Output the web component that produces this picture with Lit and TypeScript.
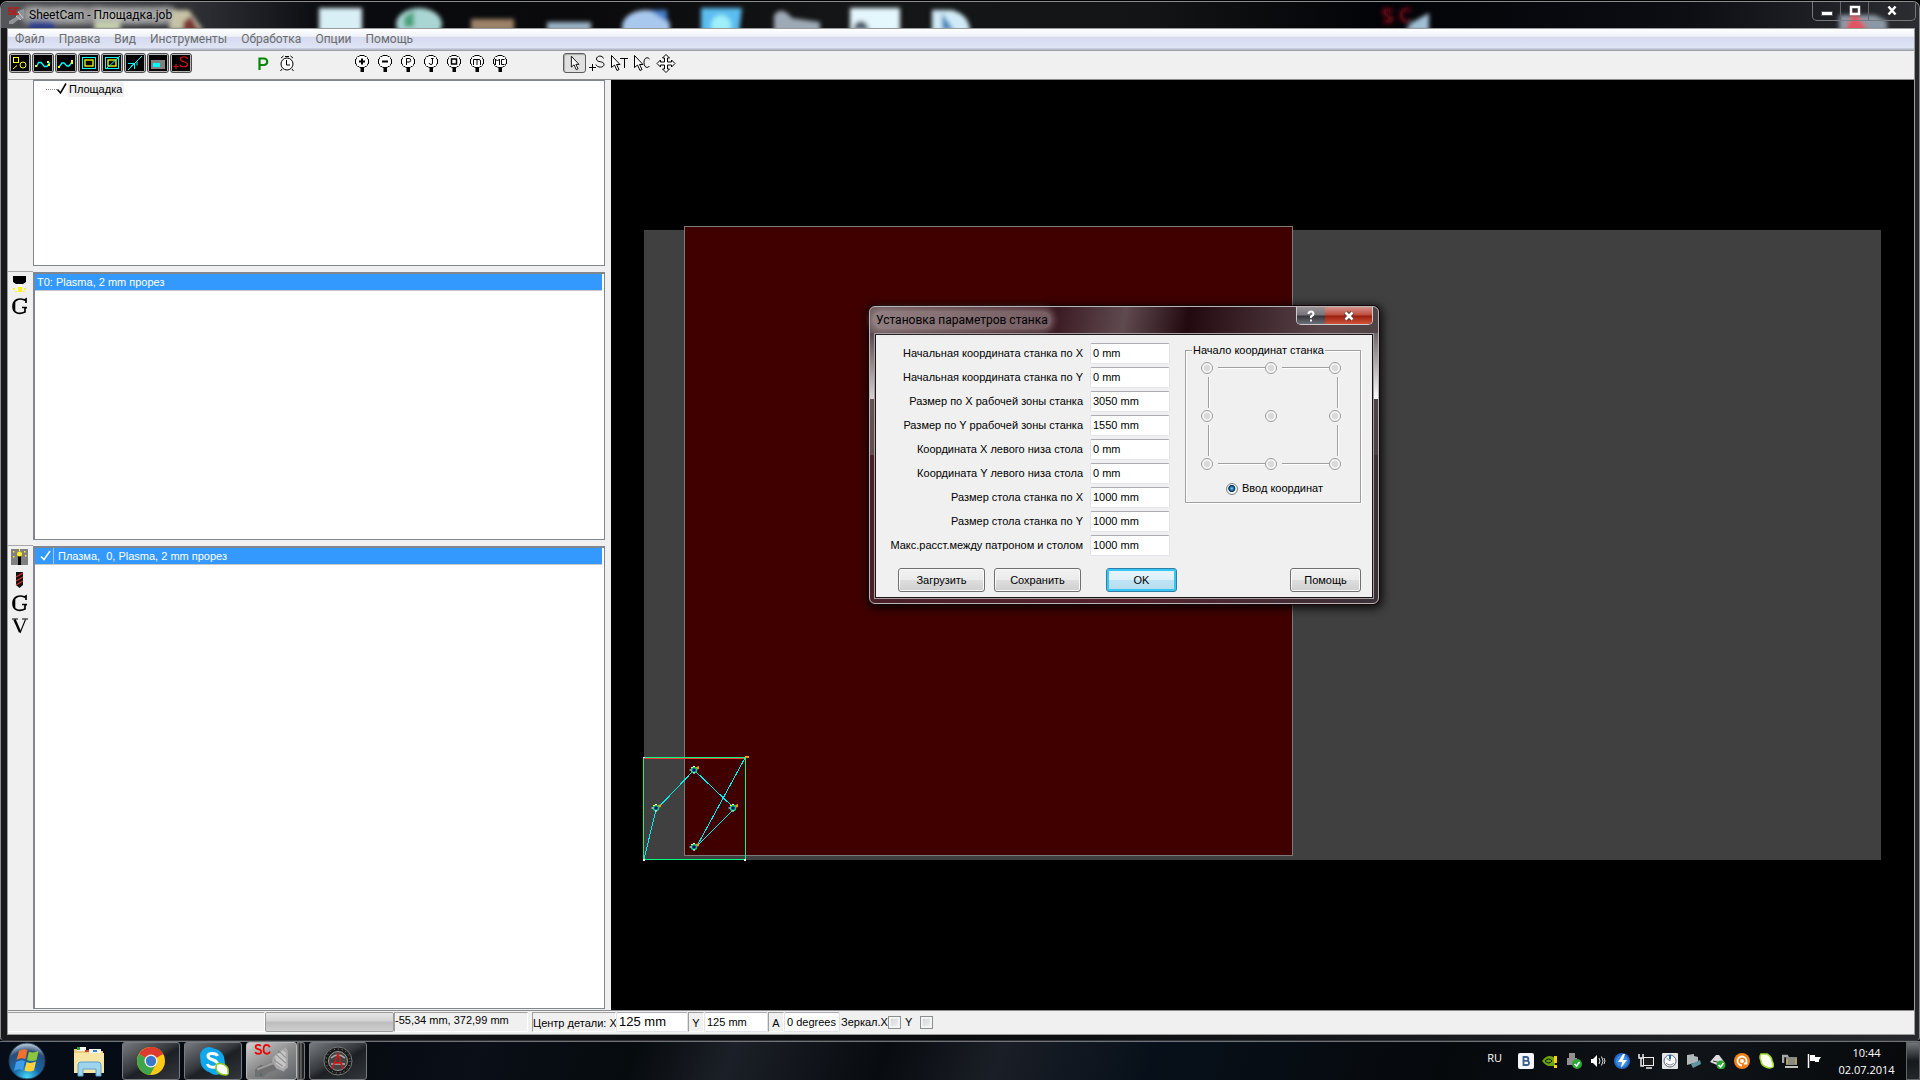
import { LitElement, html, css, svg, type TemplateResult } from "lit";
import { customElement, property } from "lit/decorators.js";

type Icon = TemplateResult;

/* ---------- toolbar glyphs, drawn on a 22 x 20 grid ---------- */

const darkTile = (inner: unknown): Icon => svg`
  <rect x="0.5" y="0.5" width="21" height="19" rx="2.5" fill="#b4b4b4" stroke="#4c4c4c"/>
  <rect x="2" y="2" width="18" height="16" fill="#000"/>${inner}`;

const lollipop = (inner: unknown): Icon => svg`
  <path d="M8.500 2.500h5M6.500 3.500h2M13.500 3.500h2M5.500 4.500v2M16.500 4.500v2M4.500 6v5M17.500 6v5M5.500 10.500v2M16.500 10.500v2M6.500 13.500h2M13.500 13.500h2M8.500 14.500h5" stroke="#000" fill="none"/>
  <ellipse cx="11" cy="8.500" rx="6" ry="5.500" fill="#fff"/>
  <rect x="9.500" y="14" width="3.500" height="5" fill="#000"/>${inner}`;

const arrow = (dx: number): Icon => svg`
  <path transform="translate(${dx} 0)" d="M.5 2.500v12l3-2.500 2.500 5.500 2-1-2.500-5h3.500z" fill="#fff" stroke="#000"/>`;

const shapeIcons: [string, Icon][] = [
  ["Деталь", darkTile(svg`<rect x="4.500" y="4.500" width="5" height="5" fill="none" stroke="#ff0"/><circle cx="14" cy="12" r="3" fill="none" stroke="#ff0"/><path d="M4 16l4-3.500" stroke="#ff0"/>`)],
  ["Путь", darkTile(svg`<path d="M4.500 14l2-4.500h2.500l3.500 4h2.500l3-4" fill="none" stroke="#0ff" stroke-width="1.300"/><path d="M3 12h2v2H3zM15 8h2v2h-2zM16 11h2v2h-2z" fill="#ff0"/>`)],
  ["Переходы", darkTile(svg`<path d="M4 14l3-4h2l3 3h2l3-4" fill="none" stroke="#0ff" stroke-width="1.300"/><path d="M3 13h2v2H3zM16 7h2v4h-2z" fill="#ff0"/>`)],
  ["Контур", darkTile(svg`<rect x="4.500" y="4.500" width="13" height="11" fill="none" stroke="#0ff"/><rect x="7" y="7" width="8" height="6" fill="none" stroke="#ff0" stroke-width="1.300"/>`)],
  ["Сегменты", darkTile(svg`<rect x="4.500" y="4.500" width="13" height="11" fill="none" stroke="#0ff"/><rect x="7" y="7" width="8" height="6" fill="none" stroke="#ff0" stroke-width="1.300"/><path d="M5 16L19 3" stroke="#0ff"/>`)],
  ["Направление", darkTile(svg`<path d="M4 17L18 3M4 10.500h6.500v5.500M10.500 10.500l-4 3M13 8.500v4" fill="none" stroke="#0ff"/>`)],
  ["Материал", darkTile(svg`<rect x="4" y="7" width="14" height="9" fill="#808080"/><rect x="6" y="10" width="7" height="4" fill="#0ff"/>`)],
  ["Старт", darkTile(svg`<path d="M3.500 13.500h5M6 11v5M17.500 6c0-3-7-3-7 0 0 3.500 7 2 7 5.500 0 3-7.500 3-7.500 0" fill="none" stroke="#e01010" stroke-width="1.200"/>`)],
];

const runIcons: [string, Icon][] = [
  ["Постпроцессор", svg`<path d="M7.500 17V5.500h4.500a3 3 0 0 1 0 6.500H8" fill="none" stroke="#008a00" stroke-width="2.200"/>`],
  ["Время", svg`<circle cx="12" cy="11" r="6" fill="#fff" stroke="#000"/><path d="M6 5l2.500-2M18 5l-2.500-2M10 3.500h4M7 16l-1.500 2M17 16l1.500 2M11.500 7v5h3.500" fill="none" stroke="#000"/>`],
];

const zoomIcons: [string, Icon][] = [
  ["Увеличить", lollipop(svg`<path d="M8 8.500h6M11 5.500v6" stroke="#000" stroke-width="2"/>`)],
  ["Уменьшить", lollipop(svg`<path d="M8 8.500h6" stroke="#000" stroke-width="2"/>`)],
  ["Вся деталь", lollipop(svg`<path d="M9.500 12V5.500h2.500a1.500 1.500 0 0 1 0 3.500H9.500" fill="none" stroke="#000"/>`)],
  ["Всё задание", lollipop(svg`<path d="M11 5.500h2.500M12.500 5.500V10q0 1.500-1.500 1.500t-2-1.500" fill="none" stroke="#000"/>`)],
  ["Рабочая область", lollipop(svg`<rect x="8.500" y="6" width="5" height="5" fill="none" stroke="#000" stroke-width="1.500"/>`)],
  ["Материал целиком", lollipop(svg`<path d="M7.500 12V6.500h5.500q1.500 0 1.500 1.500v4M11 6.500V12" fill="none" stroke="#000"/>`)],
  ["Станок целиком", lollipop(svg`<path d="M6.500 12V6l2 2 2-2v6M15.500 6.500h-3v5h3" fill="none" stroke="#000"/>`)],
];

const modeIcons: [string, Icon][] = [
  ["Выбор", arrow(7)],
  ["Начальная точка", svg`<path d="M3 14.500h7M6.500 11v7M17.500 5.500c-1-3.500-7-3-7 .5 0 4 7.500 1.500 7.500 5.500 0 3.500-7 3.500-8 0" fill="none" stroke="#000"/>`],
  ["Перемычки", svg`${arrow(2)}<path d="M11 5.500h8M15.500 5v10" stroke="#000" fill="none"/>`],
  ["Контуры", svg`${arrow(2)}<path d="M17.500 6c-1.500-2-5.500-2-5.500 3.500s4 6 5.500 3.500" stroke="#000" fill="none"/>`],
  ["Переместить", svg`<path d="M11 1.500l3.500 3.500h-2v4h4v-2L20 10.500 16.500 14v-2h-4v4h2L11 19.500 7.500 16h2v-4h-4v2L2 10.500 5.500 7v2h4V5h-2z" fill="#fff" stroke="#000"/>`],
];

@customElement("sc-toolbar")
class ScToolbar extends LitElement {
  static styles = css`
    :host { display: flex; align-items: center; height: 30px; padding: 0 1px 4px; box-sizing: border-box;
      background: #f0f0f0; border-top: 1px solid #a0a0a0; border-bottom: 1px solid #8c8c8c; }
    .group { display: flex; }
    .run { margin-left: 59px; }
    .zoom { margin-left: 53px; }
    .mode { margin-left: 51px; }
    .tool { width: 23px; height: 20px; padding: 0; border: 0; background: none; display: flex; }
    .tool svg { width: 22px; height: 20px; display: block; }
    .tool.pressed { border: 1px solid #5c5c5c; border-radius: 3px; background: #e0e0e0; box-shadow: inset 1px 1px 1px #aaa; }
    .tool.pressed svg { width: 21px; height: 18px; }
  `;
  private group(name: string, items: [string, Icon][], pressed = -1) {
    return html`<div class="group ${name}">
      ${items.map(([label, icon], i) => html`<button class="tool ${i === pressed ? "pressed" : ""}" aria-label=${label}>
        <svg viewBox="0 0 22 20">${icon}</svg></button>`)}
    </div>`;
  }
  render() {
    return html`${this.group("shapes", shapeIcons)}${this.group("run", runIcons)}
      ${this.group("zoom", zoomIcons)}${this.group("mode", modeIcons, 0)}`;
  }
}

/* ---------- window title bar ---------- */

@customElement("sc-titlebar")
class ScTitlebar extends LitElement {
  static styles = css`
    :host { display: flex; position: relative; height: 26px; overflow: hidden; }
    .backdrop { position: absolute; inset: 0; width: 100%; height: 100%; }
    .logo { width: 17px; height: 18px; margin: 5px 0 0 7px; position: relative; }
    .title { position: relative; margin: 5px 0 0 4px; font: 12px/17px Roboto, "Open Sans", sans-serif; color: #000;
      text-shadow: 0 0 6px #ddd, 0 0 8px #bbb, 0 0 10px #aaa; }
    .caption { position: relative; display: flex; margin: 0 3px 0 auto; height: 19px; border: 1px solid #77787c; border-top: 0;
      border-radius: 0 0 5px 5px; box-sizing: border-box; }
    .caption button { width: 28px; padding: 0; border: 0; border-right: 1px solid #66676b; background: none; display: grid; place-items: center; }
    .caption .close { width: 46px; border-right: 0; }
    .caption svg { width: 14px; height: 12px; }
  `;
  render() {
    return html`
      <svg class="backdrop" viewBox="0 0 1918 26" preserveAspectRatio="xMinYMin slice" aria-hidden="true">
        <defs>
          <filter id="soft" x="-30%" y="-50%" width="160%" height="200%"><feGaussianBlur stdDeviation="2"/></filter>
          <linearGradient id="glass" x1="0" x2="1">
            <stop offset="0" stop-color="#55565a"/><stop offset=".1" stop-color="#303136"/><stop offset=".17" stop-color="#0a0b0f"/>
            <stop offset=".3" stop-color="#0a0a0c"/><stop offset=".45" stop-color="#151617"/><stop offset=".6" stop-color="#131416"/>
            <stop offset=".72" stop-color="#020306"/><stop offset=".88" stop-color="#0c0e14"/><stop offset="1" stop-color="#2c2d31"/>
          </linearGradient>
        </defs>
        <rect width="1918" height="27" fill="url(#glass)"/>
        <g filter="url(#soft)" transform="translate(0 -1)">
          <rect x="20" y="5" width="156" height="19" rx="8" fill="#a0a0a0" opacity=".6"/>
          <path d="M28 29V18l14-4 12 8v7z" fill="#2b3d8c"/><path d="M93 29l2-18h26l-2 18z" fill="#c9d3b0"/>
          <path d="M168 29l2-20h18l14 20z" fill="#c8c3a6"/><path d="M182 29v-8l8-6 8 14z" fill="#7e3736"/>
          <rect x="24" y="7" width="146" height="14" rx="7" fill="#a0a0a0" opacity=".5"/>
          <rect x="318" y="7" width="43" height="24" fill="#d9eff6"/>
          <ellipse cx="418" cy="23" rx="23" ry="16" fill="#a9d5d3"/><path d="M403 16l10-6v16h-10z" fill="#4aa27c"/>
          <rect x="470" y="18" width="43" height="12" fill="#9c8266"/>
          <rect x="546" y="21" width="44" height="9" fill="#9ab2c4"/>
          <ellipse cx="645" cy="26" rx="24" ry="17" fill="#a8c8ee"/><path d="M648 9h18v12z" fill="#477ecb"/>
          <path d="M700 7h41l-3 24h-38z" fill="#5cbdf0"/><circle cx="720" cy="24" r="10" fill="#9ff0fa"/>
          <path d="M773 31V14q8-10 18 3l28 4v10z" fill="#9da9b5"/>
          <rect x="849" y="7" width="50" height="24" fill="#e4f7fc"/><path d="M852 29q2-12 12-8l5 8z" fill="#4d5a6b"/>
          <path d="M931 31V9h20q18 5 18 22z" fill="#d0ebf7"/><path d="M941 29V12l12 17z" fill="#4689bc"/>
          <path d="M1392 10q-12-4-9 3l8 4q0 6-9 3M1410 9q-11-2-10 6t10 4" fill="none" stroke="#80101a" stroke-width="3"/>
          <path d="M1404 30l6-8 18-10v18z" fill="#a2c0d4"/>
          <path d="M1838 30V14h36l12 6v10z" fill="#8c98a6"/><path d="M1844 30l9-20 14 20z" fill="#e25560"/>
        </g>
      </svg>
      <svg class="logo" viewBox="0 0 17 18" aria-hidden="true">
        <path d="M1 17v-3l7-4 2-6 6-2v10l-6 1-5 4z" fill="#8f9296"/><path d="M10 5l5 6M8 9l5 4" stroke="#d0d0d0"/>
        <path d="M5 1H1v3h4v3H0M11 1H7v6h4" fill="none" stroke="#c01818" stroke-width="1.500"/>
      </svg>
      <div class="title">SheetCam - Площадка.job</div>
      <div class="caption">
        <button aria-label="Свернуть"><svg viewBox="0 0 14 12"><rect x="1.500" y="6.500" width="11" height="4" fill="#fff" stroke="#50505c"/></svg></button>
        <button aria-label="Развернуть"><svg viewBox="0 0 14 12"><rect x="3" y="2" width="8" height="7" fill="none" stroke="#fff" stroke-width="2.500"/></svg></button>
        <button class="close" aria-label="Закрыть"><svg viewBox="0 0 14 12"><path d="M3.500 1.500l7 8M10.500 1.500l-7 8" stroke="#fff" stroke-width="2.500"/></svg></button>
      </div>`;
  }
}

/* ---------- left-hand panes ---------- */

const sideIcons: Record<string, Icon> = {
  torch: svg`<path d="M2 2h13v6l-3 2H5L2 8z" fill="#000"/><path d="M7 13h4v5H7zM2 14h2v2H2zM13 14h2v2h-2zM4 17h2v1H4zM12 17h2v1h-2z" fill="#ffef20"/><path d="M7 10h4v3H7z" fill="#fff"/>`,
  gcode: svg`<path d="M15 6V2l-1.500 1C8 .500 2 3 2 9.500s6 8.500 12 5.500v-4h1.500M11 10.500h5" fill="none" stroke="#000" stroke-width="1.700"/><path d="M3.300 5v9" stroke="#000" stroke-width="2"/>`,
  spark: svg`<rect x="0" y="1" width="17" height="16" fill="#808080"/><path d="M7 8h3v9H7z" fill="#000"/><circle cx="8.500" cy="6" r="2.500" fill="#ffef20"/><path d="M2 3h1.500v1.500H2zM13 3h1.500v1.500H13zM2 8h1.500v1.500H2zM14 7h1.500v1.500H14zM8 1h1v2H8z" fill="#ffef20"/>`,
  drill: svg`<path d="M5 1h7v13l-3.500 3L5 14z" fill="#111"/><path d="M5 6l7-4M5 10l7-4M5 14l7-4" stroke="#d03030" stroke-width="1.300"/>`,
  tool: svg`<path d="M1 2h6M11 2h6" stroke="#000" stroke-width="1.200"/><path d="M3.500 2.500L9 15" stroke="#000" stroke-width="2.400"/><path d="M14.500 2.500L9 16" stroke="#000" stroke-width="1.100"/>`,
};

@customElement("sc-pane")
class ScPane extends LitElement {
  @property({ attribute: false }) icons: [string, string][] = [];
  static styles = css`
    :host { display: grid; grid-template-columns: 25px minmax(0, 1fr); padding: 1px 6px 5px 0; background: #f0f0f0; min-height: 0; }
    :host(.first) { padding-top: 0; }
    :host(.last) { padding-bottom: 1px; }
    .icons { display: flex; flex-direction: column; gap: 5px; align-items: center; padding: 2px 2px 0 0; border-top: 1px solid #a8a8a8; margin-top: -1px; }
    .icons button { border: 0; padding: 0; background: none; display: block; }
    .icons svg { width: 18px; height: 18px; display: block; }
    .box { background: #fff; border: 1px solid #82878f; }
    :host(.list) .box { border-top-width: 2px; border-left-width: 2px; }
  `;
  render() {
    return html`<div class="icons">${this.icons.map(([name, label]) => html`
        <button aria-label=${label}><svg viewBox="0 0 18 18">${sideIcons[name]}</svg></button>`)}</div>
      <div class="box"><slot></slot></div>`;
  }
}

/* ---------- drawing area ---------- */

@customElement("sc-canvas")
class ScCanvas extends LitElement {
  static styles = css`
    :host { display: block; background: #000; min-width: 0; min-height: 0; overflow: hidden; }
    .view { display: block; width: 100%; height: 100%; }
  `;
  private pierce([x, y]: [number, number]) {
    return svg`<g transform="translate(${x} ${y})">
      <path d="M-2 -1.500l3-1 4-1.500v3l-4 1z" fill="#ff9500"/>
      <circle r="2.500" fill="#000080" stroke="#00d080" stroke-width="1.500"/>
      <path d="M-1 -3.500h2M-4.500 0h2M-1 3h2" stroke="#fff" stroke-width="1.200"/><path d="M-3 -2.500h2" stroke="#ff0"/></g>`;
  }
  render() {
    const holes: [number, number][] = [[83, 690], [45, 728], [122, 728], [83, 767]];
    return html`<svg class="view" viewBox="0 0 1303 930" preserveAspectRatio="xMinYMin meet" role="img" aria-label="Рабочая зона станка">
      <rect x="33" y="150" width="1237" height="630" fill="#404040"/>
      <rect x="73.500" y="146.500" width="608" height="629" fill="#400000" stroke="#7b7b7b"/>
      <path d="M33 678.500h101" stroke="#ff3838" stroke-width="1"/>
      <rect x="32.500" y="677.500" width="102" height="102" fill="none" stroke="#00ff80"/>
      <path d="M33 779L45 730 83 690 122 727M122 730L86 766 134 678" fill="none" stroke="#00f0f0" shape-rendering="crispEdges"/>
      ${holes.map((p) => this.pierce(p))}
      <path d="M134 676h4v2h-4z" fill="#ff9500"/><path d="M32 677h2v1h-2zM32 779h2v2h-2zM133 779h2v2h-2z" fill="#fff"/>
    </svg>`;
  }
}

/* ---------- status bar ---------- */

@customElement("sc-status")
class ScStatus extends LitElement {
  static styles = css`
    :host { display: flex; align-items: stretch; height: 24px; padding: 1px 0 2px; box-sizing: border-box;
      font: 11px/18px "Liberation Sans", Arial, sans-serif; background: #f0f0f0; border-top: 1px solid #8c8c8c; white-space: nowrap; }
    .cell { box-sizing: border-box; border: 1px solid #a0a0a0; border-right-color: #fff; border-bottom-color: #fff; }
    .blank { width: 257px; border-left: 0; }
    .bar { width: 129px; border: 1px solid #9a9a9a; border-radius: 2px; box-sizing: border-box; background: linear-gradient(#e6e6e6, #d2d2d2 45%, #bdbdbd 50%, #cfcfcf); }
    .coords { width: 134px; line-height: 14px; }
    .centre { width: 84px; margin-left: 4px; padding-top: 1px; }
    .axis { width: 16px; text-align: center; padding-top: 1px; }
    .box { box-sizing: border-box; border: 1px solid #e2e3ea; border-top-color: #abadb3; padding: 1px 2px; font: inherit; background: #fff; color: #000; width: 64px; border-radius: 2px; }
    .wide { font-size: 13px; width: 72px; }
    .narrow { width: 56px; }
    .mirror { display: flex; align-items: center; padding-left: 1px; }
    .second { padding-left: 4px; gap: 8px; }
    .tick { appearance: none; width: 13px; height: 13px; margin: 0; border: 1px solid #8e8f8f; background: linear-gradient(135deg, #cbcfd5, #f6f6f6); box-shadow: inset 0 0 0 2px #f4f4f4; }
  `;
  render() {
    return html`
      <div class="cell blank"></div>
      <div class="bar" role="progressbar" aria-label="Ход выполнения"></div>
      <div class="cell coords">-55,34 mm, 372,99 mm</div>
      <label class="cell centre" for="cx">Центр детали: X</label><input id="cx" class="box wide" value="125 mm">
      <label class="cell axis" for="cy">Y</label><input id="cy" class="box" value="125 mm">
      <label class="cell axis" for="ca">A</label><input id="ca" class="box narrow" value="0 degrees">
      <label class="mirror">Зеркал.X<input type="checkbox" class="tick"></label>
      <label class="mirror second">Y<input type="checkbox" class="tick"></label>`;
  }
}

/* ---------- machine settings dialog ---------- */

const fields: [string, string][] = [
  ["Начальная координата станка по X", "0 mm"],
  ["Начальная координата станка по Y", "0 mm"],
  ["Размер по X рабочей зоны станка", "3050 mm"],
  ["Размер по Y ррабочей зоны станка", "1550 mm"],
  ["Координата X левого низа стола", "0 mm"],
  ["Координата Y левого низа стола", "0 mm"],
  ["Размер стола станка по X", "1000 mm"],
  ["Размер стола станка по Y", "1000 mm"],
  ["Макс.расст.между патроном и столом", "1000 mm"],
];

@customElement("sc-dialog")
class ScDialog extends LitElement {
  static styles = css`
    :host { display: block; box-sizing: border-box; padding: 0 5px 5px; border: 1px solid #b9b4b6; border-radius: 6px;
      background: linear-gradient(#5a474b, #d8d2d4) left 26px / 5px 66px no-repeat,
        linear-gradient(#6b676a, #fff) right 26px / 5px 66px no-repeat,
        linear-gradient(100deg, #6a5659, #3b1a22 35%, #5f4a50 48%, #22090f 60%, #5a4449 85%, #4a4446) top / 100% 50% no-repeat,
        linear-gradient(90deg, #4a1f29, #54202c 50%, #3b3238);
      box-shadow: 0 0 0 1px #180508, 1px 2px 9px 3px rgba(0, 0, 0, .75);
      font: 11px/15px "Liberation Sans", Arial, sans-serif; color: #000; }
    .head { display: flex; height: 27px; }
    .title { margin: 4px 0 0 -2px; padding: 0 3px; height: 18px; font: 12px/19px Roboto, "Open Sans", sans-serif;
      background: rgba(205, 190, 193, .4); border-radius: 8px; box-shadow: 0 0 6px 3px rgba(205, 190, 193, .4); }
    .caption { display: flex; margin-left: auto; height: 18px; border: 1px solid #ccc; border-top: 0; border-radius: 0 0 5px 5px; overflow: hidden; box-sizing: border-box; }
    .caption button { padding: 0; border: 0; display: grid; place-items: center; }
    .caption svg { width: 14px; height: 14px; }
    .help { width: 28px; background: linear-gradient(#9a9296, #77737a 48%, #353439 52%, #6c7078); }
    .close { width: 47px; background: linear-gradient(#d4938b, #bd4b3c 48%, #9b1d0e 52%, #d0543a); }
    .body { background: #f0f0f0; border: 1px solid #1c1518; outline: 1px solid #a59da0; padding: 8px 11px 5px 6px; }
    .main { display: grid; grid-template-columns: 288px 176px; justify-content: space-between; align-items: start; }
    .fields { display: grid; gap: 3px; }
    .row { display: grid; grid-template-columns: minmax(0, 1fr) 80px; gap: 7px; align-items: center; text-align: right; white-space: nowrap; }
    .row label { justify-self: end; }
    .row input { box-sizing: border-box; width: 100%; height: 21px; padding: 0 2px 1px; font: inherit; color: #000; background: #fff; border: 1px solid #e2e3ea; border-top-color: #abadb3; border-radius: 2px; }
    .origin { margin: 0; padding: 5px 19px 6px 15px; border: 1px solid #a0a0a0; box-shadow: 1px 1px #fff, inset 1px 1px #fff; min-width: 0; }
    .origin legend { padding: 0 1px; margin-left: -9px; background: #f0f0f0; height: 14px; }
    .grid { display: grid; grid-template-columns: repeat(3, 12px); grid-template-rows: repeat(3, 12px); justify-content: space-between; row-gap: 36px; }
    .grid svg { grid-area: 1 / 1 / 4 / 4; width: 100%; height: 100%; }
    .dot { appearance: none; width: 12px; height: 12px; margin: 0; border: 1px solid #9a9b9b; border-radius: 50%; background: radial-gradient(#dadada 40%, #f8f8f8 55%); }
    .dot.on { border-color: #7c8288; background: radial-gradient(circle at 48% 45%, #8fd6f4, #0f5f98 28%, #0a2f50 42%, #f4f4f4 52%); }
    .manual { display: flex; justify-content: center; align-items: center; gap: 4px; margin-top: 11px; padding-left: 7px; }
    .actions { display: flex; gap: 9px; margin-top: 12px; padding-left: 16px; }
    .btn { box-sizing: border-box; height: 24px; width: 87px; border: 1px solid #707070; border-radius: 3px; padding: 0; font: inherit; color: #000;
      background: linear-gradient(#f2f2f2, #ebebeb 48%, #dddddd 52%, #cfcfcf); box-shadow: inset 0 0 0 1px #fafafa; }
    .small { width: 71px; }
    .ok { margin-left: 16px; border-color: #2f7fa8; background: linear-gradient(#e8f5fc, #dcf0fa 48%, #c0e3f4 52%, #b4dcee); box-shadow: inset 0 0 0 2px #35c6f4; }
    .last { margin-left: auto; }
  `;
  render() {
    return html`
      <div class="head">
        <div class="title">Установка параметров станка</div>
        <div class="caption">
          <button class="help" aria-label="Справка"><svg viewBox="0 0 14 14"><path d="M4.500 5q0-2.500 2.500-2.500T9.500 5Q9.500 6.500 7 7.500V9M7 10.500v2" fill="none" stroke="#fff" stroke-width="2"/></svg></button>
          <button class="close" aria-label="Закрыть"><svg viewBox="0 0 14 14"><path d="M3.500 3.500l7 7M10.500 3.500l-7 7" stroke="#4a3436" stroke-width="4.500"/><path d="M3.500 3.500l7 7M10.500 3.500l-7 7" stroke="#fff" stroke-width="2.600"/></svg></button>
        </div>
      </div>
      <div class="body">
        <div class="main">
          <div class="fields">${fields.map(([label, value], i) => html`
            <div class="row"><label for="f${i}">${label}</label><input id="f${i}" .value=${value}></div>`)}</div>
          <fieldset class="origin">
            <legend>Начало координат станка</legend>
            <div class="grid">
              <svg viewBox="0 0 140 108" preserveAspectRatio="none" aria-hidden="true">
                <path d="M17 5.500h47M81 5.500h47M17 101.500h47M81 101.500h47M7.500 15v31M7.500 63v31M136.500 15v31M136.500 63v31" stroke="#a0a0a0"/>
                <path d="M17 6.500h47M81 6.500h47M17 102.500h47M81 102.500h47M8.500 15v31M8.500 63v31M137.500 15v31M137.500 63v31" stroke="#fff"/>
              </svg>
              ${Array.from({ length: 9 }, (_, i) => html`<input type="radio" class="dot" name="origin" disabled aria-label="Точка ${i + 1}"
                style="grid-area: ${Math.floor(i / 3) + 1} / ${(i % 3) + 1}">`)}
            </div>
            <label class="manual"><input type="radio" class="dot on" name="origin" checked>Ввод координат</label>
          </fieldset>
        </div>
        <div class="actions">
          <button class="btn">Загрузить</button><button class="btn">Сохранить</button>
          <button class="btn small ok">OK</button><button class="btn small last">Помощь</button>
        </div>
      </div>`;
  }
}

/* ---------- taskbar ---------- */

const chrome = svg`<circle cx="16" cy="16" r="14" fill="#fbc916"/><path d="M16 16L3.900 9A14 14 0 0 1 28.100 9z" fill="#dd3b2d"/>
  <path d="M16 2a14 14 0 0 1 12.100 7H16z" fill="#dd3b2d"/><path d="M3.900 9A14 14 0 0 0 15 30l6-11-5-3z" fill="#3fa548"/><circle cx="16" cy="16" r="6.500" fill="#f3f3f3"/><circle cx="16" cy="16" r="5.200" fill="#3c78c8"/>`;
const skype = svg`<rect x="3" y="2" width="18" height="18" rx="9" fill="#10a8ea"/><rect x="10" y="10" width="18" height="20" rx="9" fill="#10a8ea"/><circle cx="15.500" cy="15.500" r="12" fill="#10a8ea"/>
  <path d="M20.500 11c-1-3.500-9.500-3.500-9.500 0 0 4.500 9.500 3 9.500 8 0 4.500-9 4-10 0" fill="none" stroke="#fff" stroke-width="3"/>
  <path d="M20 19q2-1 6 0 6 3 5 7 1 4-2 4-6 0-9-4-2-4 0-7z" fill="#fff" stroke="#8cc820" stroke-width="1.500"/>`;
const sheetcam = svg`<path d="M1 31v-7l3-3 9-2 6-3 7 4-4 4-9 3-4 4z" fill="#707070"/><path d="M18 12l7-6 5-3 2 3v16l-4 4-7-3-4-6z" fill="#a8a8a8"/>
  <path d="M20 11l7-5 3 2v12l-3 3-6-4z" fill="#c6c6c6"/><path d="M19 15l8 6M21 10l9 8M24 7l6 6" stroke="#8e8e8e"/><path d="M3 24l10-4 6-2" stroke="#9c9c9c" stroke-width="2" fill="none"/>
  <path d="M6 28h1v2H6zM23 7h1v1h-1zM6 20h1v1H6z" fill="#0a6a6a"/>
  <path d="M6.500 1.800Q5.500.8 4 .8 1.500.8 1.500 2.800 1.500 4.200 4 4.800 6.800 5.400 6.800 7.200 6.800 9.200 4 9.200 2 9.200 1 7.800M15 2.800Q14 .8 12 .8 9 .8 9 5t3.200 4.200q2 0 3-2" fill="none" stroke="#e00" stroke-width="1.600"/>`;
const badge = svg`<circle cx="16" cy="16" r="14" fill="#1a1a1a" stroke="#777"/><circle cx="16" cy="16" r="9.500" fill="#444" stroke="#999"/>
  <path d="M9 13q7-6 14 0M9 19h14" stroke="#aaa" stroke-width="1.500" fill="none"/><path d="M10 24l6-15 5 15M12 18h8" fill="none" stroke="#d01818" stroke-width="1.600"/><circle cx="16" cy="16" r="12" fill="none" stroke="#999" stroke-dasharray="1 3"/>`;

const tray: [string, Icon][] = [
  ["ВКонтакте", svg`<rect width="16" height="16" rx="2" fill="#f4f6f9"/><path d="M5.500 4h3q1.800 0 1.800 1.900T8.500 7.800h-3h3.500q2 0 2 2.100t-2 2.100H5.500z" fill="none" stroke="#3d5f8c" stroke-width="1.800"/>`],
  ["NVIDIA", svg`<path d="M0 8q6-8 13-3v8H6Q2 11 0 8z" fill="#6aa50e"/><path d="M3 8q4-4 7 0-3 4-7 0z" fill="none" stroke="#111"/><path d="M12 3h3v7h-3zM12 12h3v3h-3z" fill="#ffcf10"/>`],
  ["Устройства", svg`<path d="M3 0h6v5h2v7H1V5h2z" fill="#909090"/><circle cx="11" cy="11" r="5" fill="#2aa836"/><path d="M8.500 11l2 2 3-4" fill="none" stroke="#fff" stroke-width="1.500"/>`],
  ["Громкость", svg`<path d="M1 6h2l4-4v12l-4-4H1z" fill="#fff"/><path d="M9 5q2 3 0 6M11.500 3.500q3 4.500 0 9M14 5q2 3 0 6" fill="none" stroke="#ddd"/>`],
  ["Питание", svg`<circle cx="8" cy="8" r="8" fill="#2468c8"/><circle cx="8" cy="8" r="6" fill="#3c8ce4"/><path d="M9 1L4 9h4l-1 6 6-8H9l2-6z" fill="#fff"/>`],
  ["Сеть", svg`<rect x="5.500" y="4.500" width="10" height="8" fill="#1c1c1c" stroke="#eee"/><path d="M1 1v4h4V1M3 5v8h3M8 15h6" stroke="#eee" stroke-width="1.500" fill="none"/>`],
  ["Монитор", svg`<rect width="16" height="16" rx="1" fill="#e4e6e8"/><circle cx="8" cy="8" r="6" fill="#fff" stroke="#5d6b7c"/><path d="M8 3v5M8 8l-3.500-3M4 10q4 4 8 0" stroke="#7a8794" fill="none"/><path d="M7 2h2v4H7z" fill="#286cb8"/>`],
  ["Сканер", svg`<path d="M1 2l7-1v9l-7 2zM8 3l4 1v5l-4 2z" fill="#b0b8bc"/><path d="M5 11l9-4 1 4-8 4z" fill="#6096a0"/>`],
  ["Диск", svg`<path d="M0 9l6-7h3l6 8-8 2z" fill="#ddd"/><path d="M3 8l8 2" stroke="#333"/><circle cx="11" cy="12" r="4.500" fill="#2aa836"/><path d="M8.500 12l2 2 3-4" fill="none" stroke="#fff" stroke-width="1.500"/>`],
  ["Avast", svg`<circle cx="8" cy="8" r="8" fill="#f28018"/><path d="M8 12.500A4.500 4.500 0 1 1 12.500 8v2.500H9.800" fill="none" stroke="#fff" stroke-width="1.800"/><circle cx="8" cy="8" r="2" fill="#fff"/>`],
  ["Агент", svg`<path d="M3 1h6q5 3 5 7 2 3 1 6-3 2-7 0-5-2-5-6-2-4 0-7z" fill="#fbfff0" stroke="#a0dc30" stroke-width="1.500"/>`],
  ["Накопитель", svg`<path d="M1 10V3h4l1 2" fill="none" stroke="#a8a8a8" stroke-width="2.500"/><path d="M4 4h11v8H4z" fill="#8a8a84"/><path d="M3 13h13v2H3z" fill="#c4c4b8"/><path d="M5 6v5M14 6v5" stroke="#ddb830"/>`],
  ["Центр поддержки", svg`<path d="M2.500 1v14" stroke="#fff" stroke-width="1.500"/><path d="M4 2h5v2h6l-2 3v2H9V8H4z" fill="#fff"/>`],
];

@customElement("sc-taskbar")
class ScTaskbar extends LitElement {
  static styles = css`
    :host { display: flex; align-items: stretch; height: 39px; box-sizing: border-box; border-top: 1px solid #6d747c; padding-left: 8px;
      background: linear-gradient(110deg, #060d18, #050a10 15%, #0a0f18 25%, #060b0e 33%, #1b1f27 38%, #080c10 46%, #1a1e26 52%, #07101a 60%, #06090c 75%, #101418 88%, #06080a);
      font: 11px/15px "Open Sans", "Noto Sans", sans-serif; color: #fff; }
    button { border: 0; padding: 0; background: none; color: inherit; font: inherit; }
    .start { width: 38px; margin-right: 21px; }
    .start svg { display: block; width: 38px; height: 38px; }
    .explorer { width: 44px; margin-right: 11px; }
    .app { width: 58px; margin-right: 4px; box-sizing: border-box; border: 1px solid #777c82; border-radius: 3px; display: grid; place-items: center;
      background: linear-gradient(150deg, #777b80, #35393d 45%, #1c2024 55%, #33373b); }
    .app svg, .explorer svg { display: block; width: 32px; height: 32px; margin: auto; }
    .active { width: 51px; margin-right: 0; border-color: #b6b6b6; background: linear-gradient(150deg, #cfcfcf, #8a8a8a 50%, #606468); }
    .active svg { width: 36px; height: 34px; }
    .stack { width: 7px; margin-right: 4px; border: solid #777; border-width: 1px 1px 1px 0; border-radius: 0 3px 3px 0; background: linear-gradient(90deg, #777 1px, #333 2px, #333 3px, #888 4px, #222 5px); }
    .lang { margin: 8px 16px 0 auto; }
    .tray { display: flex; gap: 8px; margin-top: 11px; height: 16px; }
    .tray svg { display: block; width: 16px; height: 16px; }
    .clock { width: 84px; box-sizing: border-box; text-align: center; padding: 2px 0 0 5px; line-height: 17px; }
    .peek { width: 14px; box-sizing: border-box; border: 1px solid #606468; background: linear-gradient(#70747a, #16191c 50%, #23272a); }
  `;
  render() {
    return html`
      <button class="start" aria-label="Пуск"><svg viewBox="0 0 38 38">
        <defs><radialGradient id="orb" cx=".5" cy=".95" r=".9"><stop offset="0" stop-color="#48d8fa"/><stop offset=".4" stop-color="#1568a8"/><stop offset=".8" stop-color="#2a4c78"/><stop offset="1" stop-color="#a8bccc"/></radialGradient></defs>
        <circle cx="19" cy="19" r="18" fill="url(#orb)" stroke="#243c54"/>
        <path d="M11 9q5-3 8.500-1l-2 9q-5-2-9 1z" fill="#f0702c"/><path d="M21 9.500q4 2 9.500-.5l-2 9q-5 2-9.500 0z" fill="#8cc63c"/>
        <path d="M8 20q5-3 9-1l-2 9q-5-2-9 1z" fill="#3f9ce8"/><path d="M18.500 20q4 2 9.500-.5l-2 9q-5 2-9.500 0z" fill="#ffd13c"/></svg></button>
      <button class="explorer" aria-label="Проводник"><svg viewBox="0 0 32 32">
        <path d="M1 4h11l2 2h16v22H1z" fill="#e8cf7c"/><path d="M4 2h9v4H4zM16 4h12v4H16z" fill="#f6f6ee"/><path d="M4 2h3v3H4z" fill="#28a040"/><path d="M12 5h4v2h-4z" fill="#d84030"/><path d="M20 5h4v2h-4z" fill="#2888d0"/>
        <path d="M1 8h30v20H1z" fill="#f6e5a4"/><path d="M5 31V20q0-3 3-3h17q3 0 3 3v11h-5v-7H10v7z" fill="#9fd4ee" stroke="#5ba0cc"/></svg></button>
      <button class="app" aria-label="Chrome"><svg viewBox="0 0 32 32">${chrome}</svg></button>
      <button class="app" aria-label="Skype"><svg viewBox="0 0 32 32">${skype}</svg></button>
      <button class="app active" aria-label="SheetCam"><svg viewBox="0 0 34 32">${sheetcam}</svg></button><span class="stack"></span>
      <button class="app" aria-label="Artsoft"><svg viewBox="0 0 32 32">${badge}</svg></button>
      <span class="lang">RU</span>
      <div class="tray">${tray.map(([label, icon]) => html`<button aria-label=${label}><svg viewBox="0 0 16 16">${icon}</svg></button>`)}</div>
      <div class="clock">10:44<br>02.07.2014</div>
      <button class="peek" aria-label="Показать рабочий стол"></button>`;
  }
}

/* ---------- desktop ---------- */

const menu = ["Файл", "Правка", "Вид", "Инструменты", "Обработка", "Опции", "Помощь"];

@customElement("app-root")
class AppRoot extends LitElement {
  static styles = css`
    :host { display: grid; grid-template-rows: minmax(0, 1fr) auto; height: 100vh; position: relative; overflow: hidden; background: #000; }
    .window { display: flex; flex-direction: column; box-sizing: border-box; min-height: 0; padding: 0 4px 5px 6px; margin-top: 1px;
      border: 1px solid #8b8c8f; border-bottom-color: #333; border-radius: 7px 7px 4px 4px; background: linear-gradient(90deg, #1a1a1c, #0a0b0d 50%, #26282b); }
    .bar { margin: 0 -4px 0 -6px; border-radius: 7px 7px 0 0; flex: none; }
    .client { flex: 1; min-height: 0; display: grid; grid-template-rows: 21px 30px minmax(0, 1fr) 24px; border: 1px solid #9a9b9d; background: #f0f0f0; }
    .menu { display: flex; gap: 14px; padding: 0 7px; font: 12px/20px Roboto, "Open Sans", sans-serif;
      background: linear-gradient(#fff, #eef1f8 35%, #d5dbee 40%, #dfe5f5 90%, #b6bccc 95%); }
    .menu a { color: #6d6d6d; text-decoration: none; }
    .work { display: grid; grid-template-columns: minmax(0, 603fr) minmax(0, 1303fr); min-height: 0; }
    .side { display: grid; grid-template-rows: 191fr 274fr 465fr; min-height: 0; font: 11px/15px "Liberation Sans", Arial, sans-serif; }
    .tree { display: flex; align-items: center; padding-left: 12px; }
    .tree svg { width: 22px; height: 16px; }
    .leaf { background: #f0f0f0; padding: 0 2px 0 1px; }
    .item { display: flex; align-items: center; height: 16px; background: #3399ff; color: #fff; padding-left: 2px; margin-right: 2px; border-bottom: 1px solid #c8c8c8; white-space: pre; }
    .mark { width: 16px; height: 16px; border-right: 1px solid #a8c8e8; margin-right: 4px; }
    .dialog { position: absolute; left: 869px; top: 306px; width: 510px; }
  `;
  render() {
    return html`
      <div class="window">
        <sc-titlebar class="bar"></sc-titlebar>
        <div class="client">
          <nav class="menu">${menu.map((m) => html`<a href="#">${m}</a>`)}</nav>
          <sc-toolbar></sc-toolbar>
          <div class="work">
            <div class="side">
              <sc-pane class="first"><div class="tree">
                <svg viewBox="0 0 22 16" aria-hidden="true"><path d="M0 8.500h11" stroke="#888" stroke-dasharray="1 1"/><path d="M11.500 8.500l3 3.500L20 2.500" fill="none" stroke="#000" stroke-width="1.500"/></svg>
                <span class="leaf">Площадка</span></div></sc-pane>
              <sc-pane class="list" .icons=${[["torch", "Инструмент"], ["gcode", "G-код"]]}><div class="item">T0: Plasma, 2 mm прорез</div></sc-pane>
              <sc-pane class="list last" .icons=${[["spark", "Плазма"], ["drill", "Сверление"], ["gcode", "G-код"], ["tool", "V-код"]]}><div class="item">
                <svg class="mark" viewBox="0 0 16 16" aria-hidden="true"><path d="M4 8.500l3 3L13 3" fill="none" stroke="#fff" stroke-width="1.500"/></svg>Плазма,  0, Plasma, 2 mm прорез</div></sc-pane>
            </div>
            <sc-canvas></sc-canvas>
          </div>
          <sc-status></sc-status>
        </div>
      </div>
      <sc-taskbar></sc-taskbar>
      <sc-dialog class="dialog" role="dialog" aria-label="Установка параметров станка"></sc-dialog>`;
  }
}
